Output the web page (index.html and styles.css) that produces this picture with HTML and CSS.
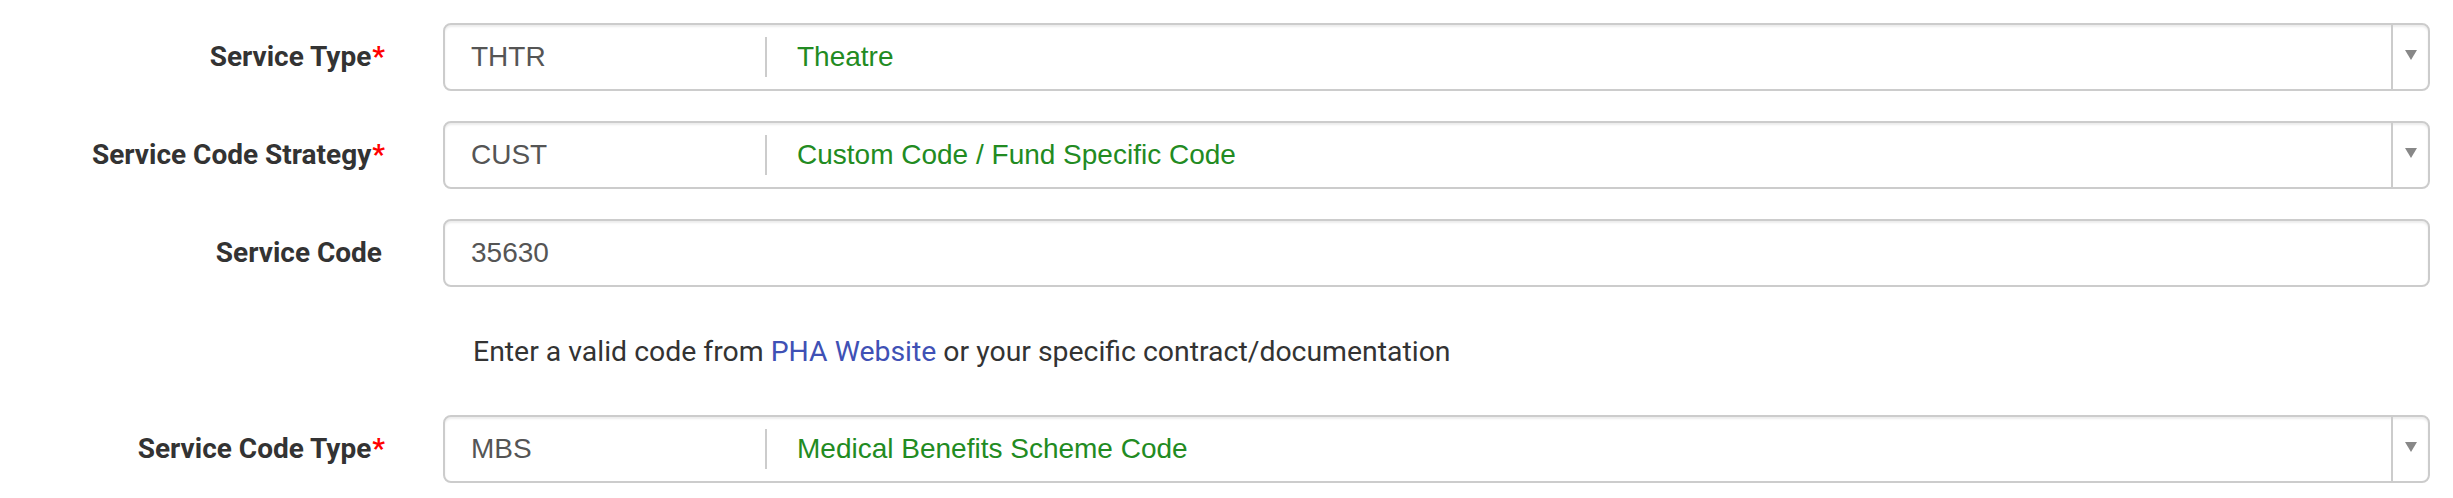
FILE: index.html
```html
<!DOCTYPE html>
<html lang="en">
<head>
<meta charset="utf-8">
<title>Service form</title>
<link rel="stylesheet" href="styles.css">
</head>
<body>
<form class="form">
  <div class="group">
    <label class="label">Service Type<span class="req">*</span></label>
    <div class="field">
      <div class="select">
        <span class="code">THTR</span><span class="sep"></span><span class="desc">Theatre</span>
        <span class="arrow"><span class="tri"></span></span>
      </div>
    </div>
  </div>
  <div class="group">
    <label class="label">Service Code Strategy<span class="req">*</span></label>
    <div class="field">
      <div class="select">
        <span class="code">CUST</span><span class="sep"></span><span class="desc">Custom Code / Fund Specific Code</span>
        <span class="arrow"><span class="tri"></span></span>
      </div>
    </div>
  </div>
  <div class="group group-help">
    <label class="label label-plain">Service Code</label>
    <div class="field">
      <div class="input"><span class="code">35630</span></div>
    </div>
  </div>
  <div class="help-row">
    <p class="help">Enter a valid code from <a class="link" href="#">PHA Website</a> or your specific contract/documentation</p>
  </div>
  <div class="group">
    <label class="label">Service Code Type<span class="req">*</span></label>
    <div class="field">
      <div class="select">
        <span class="code">MBS</span><span class="sep"></span><span class="desc">Medical Benefits Scheme Code</span>
        <span class="arrow"><span class="tri"></span></span>
      </div>
    </div>
  </div>
</form>
</body>
</html>
```
FILE: styles.css
```css
html, body {
  margin: 0;
  padding: 0;
  background: #ffffff;
}
.form {
  padding-top: 23px;
  font-family: Roboto, "Liberation Sans", Arial, sans-serif;
}
.group {
  display: flex;
  align-items: baseline;
  margin-bottom: 30px;
}
.group-help {
  margin-bottom: 0;
}
.label {
  width: 385px;
  flex: none;
  text-align: right;
  font-family: Roboto, sans-serif;
  font-weight: 700;
  font-size: 28px;
  color: #333333;
}
.label-plain {
  width: 382px;
  margin-right: 3px;
}
.req {
  color: #ff0000;
  margin-left: 1px;
}
.field {
  flex: 1;
  padding-left: 58px;
  padding-right: 23px;
}
.select, .input {
  display: flex;
  align-items: center;
  height: 68px;
  box-sizing: border-box;
  border: 2px solid #cccccc;
  border-radius: 8px;
  box-shadow: inset 0 2px 2px rgba(0, 0, 0, 0.075);
  font-family: "Liberation Sans", Arial, sans-serif;
  font-size: 28px;
  color: #555555;
  background: #ffffff;
}
.code {
  width: 294px;
  flex: none;
  padding-left: 26px;
}
.sep {
  width: 2px;
  height: 40px;
  background: #cccccc;
  flex: none;
}
.desc {
  flex: 1;
  padding-left: 30px;
  color: #228b22;
}
.arrow {
  align-self: stretch;
  width: 35px;
  flex: none;
  border-left: 2px solid #cccccc;
  display: flex;
  align-items: center;
  justify-content: center;
}
.tri {
  width: 0;
  height: 0;
  border-left: 6px solid transparent;
  border-right: 6px solid transparent;
  border-top: 10px solid #888888;
  margin-top: -5px;
}
.help-row {
  padding-left: 473px;
  margin: 45px 0 43px 0;
}
.help {
  margin: 0;
  font-family: Roboto, sans-serif;
  font-size: 28.4px;
  line-height: 40px;
  color: #333333;
}
.link {
  color: #3f51b5;
  text-decoration: none;
}
```
